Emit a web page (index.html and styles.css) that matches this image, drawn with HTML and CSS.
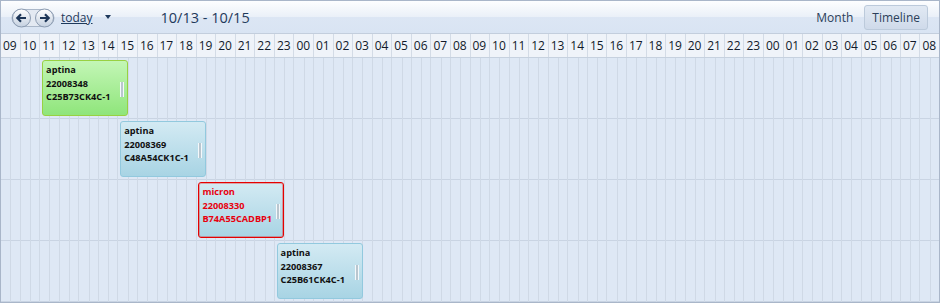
FILE: index.html
```html
<!DOCTYPE html>
<html lang="en">
<head>
    <meta charset="UTF-8">
    <title>Scheduler - Timeline</title>
    <link rel="stylesheet" href="styles.css">
</head>
<body>
    <div class="scheduler">
        <div class="toolbar">
            <div class="nav-buttons">
                <svg width="44" height="20" viewBox="0 0 44 20">
                    <defs>
                        <linearGradient id="navGrad" x1="0" y1="0" x2="0" y2="1">
                            <stop offset="0" stop-color="#ffffff"/>
                            <stop offset="1" stop-color="#c4d0e0"/>
                        </linearGradient>
                    </defs>
                    <rect x="1" y="1.5" width="42" height="17" rx="8.5" fill="#e3e9f2" stroke="#aab7c9"/>
                    <circle cx="10.5" cy="10" r="9" fill="url(#navGrad)" stroke="#8b9bb1"/>
                    <circle cx="33.5" cy="10" r="9" fill="url(#navGrad)" stroke="#8b9bb1"/>
                    <path d="M15 10H6.5M10 6.3 6.3 10 10 13.7" fill="none" stroke="#1c3557" stroke-width="2.2"/>
                    <path d="M29 10h8.5M34 6.3 37.7 10 34 13.7" fill="none" stroke="#1c3557" stroke-width="2.2"/>
                </svg>
            </div>
            <a href="#" class="today">today</a>
            <span class="caret"></span>
            <div class="range">10/13 - 10/15</div>
            <div class="views">
                <span class="view">Month</span>
                <span class="view active">Timeline</span>
            </div>
        </div>

        <div class="hours">
            <div class="hour">09</div><div class="hour">10</div><div class="hour">11</div><div class="hour">12</div>
            <div class="hour">13</div><div class="hour">14</div><div class="hour">15</div><div class="hour">16</div>
            <div class="hour">17</div><div class="hour">18</div><div class="hour">19</div><div class="hour">20</div>
            <div class="hour">21</div><div class="hour">22</div><div class="hour">23</div><div class="hour">00</div>
            <div class="hour">01</div><div class="hour">02</div><div class="hour">03</div><div class="hour">04</div>
            <div class="hour">05</div><div class="hour">06</div><div class="hour">07</div><div class="hour">08</div>
            <div class="hour">09</div><div class="hour">10</div><div class="hour">11</div><div class="hour">12</div>
            <div class="hour">13</div><div class="hour">14</div><div class="hour">15</div><div class="hour">16</div>
            <div class="hour">17</div><div class="hour">18</div><div class="hour">19</div><div class="hour">20</div>
            <div class="hour">21</div><div class="hour">22</div><div class="hour">23</div><div class="hour">00</div>
            <div class="hour">01</div><div class="hour">02</div><div class="hour">03</div><div class="hour">04</div>
            <div class="hour">05</div><div class="hour">06</div><div class="hour">07</div><div class="hour">08</div>
        </div>

        <div class="timeline">
            <!-- hour / half-hour lines -->
            <div class="slots">
                <div class="slot"></div><div class="slot"></div><div class="slot"></div><div class="slot"></div>
                <div class="slot"></div><div class="slot"></div><div class="slot"></div><div class="slot"></div>
                <div class="slot"></div><div class="slot"></div><div class="slot"></div><div class="slot"></div>
                <div class="slot"></div><div class="slot"></div><div class="slot"></div><div class="slot"></div>
                <div class="slot"></div><div class="slot"></div><div class="slot"></div><div class="slot"></div>
                <div class="slot"></div><div class="slot"></div><div class="slot"></div><div class="slot"></div>
                <div class="slot"></div><div class="slot"></div><div class="slot"></div><div class="slot"></div>
                <div class="slot"></div><div class="slot"></div><div class="slot"></div><div class="slot"></div>
                <div class="slot"></div><div class="slot"></div><div class="slot"></div><div class="slot"></div>
                <div class="slot"></div><div class="slot"></div><div class="slot"></div><div class="slot"></div>
                <div class="slot"></div><div class="slot"></div><div class="slot"></div><div class="slot"></div>
                <div class="slot"></div><div class="slot"></div><div class="slot"></div><div class="slot"></div>
            </div>
            <div class="rows">
                <div class="row"></div><div class="row"></div><div class="row"></div><div class="row"></div>
            </div>
            <!-- events, placed on half-hour columns -->
            <div class="events">
                <div class="event green" style="grid-row: 1; grid-column: 5 / span 9;">
                    <div>aptina</div><div>22008348</div><div>C25B73CK4C-1</div>
                    <span class="grip"></span>
                </div>
                <div class="event blue" style="grid-row: 2; grid-column: 13 / span 9;">
                    <div>aptina</div><div>22008369</div><div>C48A54CK1C-1</div>
                    <span class="grip"></span>
                </div>
                <div class="event blue alert" style="grid-row: 3; grid-column: 21 / span 9;">
                    <div>micron</div><div>22008330</div><div>B74A55CADBP1</div>
                    <span class="grip"></span>
                </div>
                <div class="event blue" style="grid-row: 4; grid-column: 29 / span 9;">
                    <div>aptina</div><div>22008367</div><div>C25B61CK4C-1</div>
                    <span class="grip"></span>
                </div>
            </div>
        </div>
    </div>
</body>
</html>
```

FILE: styles.css
```css
:root {
    --frame: #a9b6c9;
    --navy: #1e395b;
    --line: #cfd9e6;
    --body-bg: #dee8f5;
}

body {
    margin: 0;
    font-family: "Open Sans", "Noto Sans", sans-serif;
    background: #ffffff;
}

.scheduler {
    width: 938px;
    border: 1px solid var(--frame);
    display: flex;
    flex-direction: column;
}

/* Toolbar */
.toolbar {
    height: 32px;
    display: flex;
    align-items: center;
    padding: 0 11px 0 10px;
    background: linear-gradient(#fdfeff 0%, #eaf0f8 50%, #dce6f4 50%, #d9e4f3 100%);
    color: var(--navy);
}

.nav-buttons {
    display: flex;
    margin-top: 1px;
}

.today {
    margin-left: 6px;
    font-size: 12px;
    color: var(--navy);
    text-decoration: underline;
}

.caret {
    margin-left: 12px;
    width: 0;
    height: 0;
    border-left: 3px solid transparent;
    border-right: 3px solid transparent;
    border-top: 4px solid var(--navy);
}

.range {
    margin-left: 50px;
    font-size: 14.5px;
}

.views {
    margin-left: auto;
    display: flex;
    align-items: center;
    gap: 2px;
    font-size: 12px;
    color: #2b3f5a;
}

.view {
    padding: 3px 8px;
    border: 1px solid transparent;
    border-radius: 3px;
}

.view.active {
    padding: 3px 7px;
    border-color: #bccadb;
    background: linear-gradient(#e1e9f3, #cfdaea);
}

/* Hour header */
.hours {
    display: flex;
    border-top: 1px solid #c3cedd;
    border-bottom: 1px solid #c6d1df;
    background: #eff3f9;
}

.hour {
    flex: 1;
    height: 23px;
    line-height: 23px;
    padding-left: 2px;
    font-size: 12px;
    color: #111a2a;
    border-right: 1px solid #d3dbe6;
    box-sizing: border-box;
}

.hour:last-child {
    border-right: none;
}

/* Timeline body */
.timeline {
    display: grid;
    background: var(--body-bg);
}

.timeline > * {
    grid-area: 1 / 1;
}

.slots {
    display: flex;
}

.slot {
    flex: 1;
    border-right: 1px solid var(--line);
    position: relative;
}

.slot:last-child {
    border-right: none;
}

.slot::after {
    content: "";
    position: absolute;
    top: 0;
    bottom: 0;
    left: 50%;
    border-left: 1px solid var(--line);
}

.rows {
    display: flex;
    flex-direction: column;
}

.row {
    height: 60px;
    border-bottom: 1px solid #c9d4e3;
}

.events {
    display: grid;
    grid-template-columns: repeat(96, 1fr);
    grid-template-rows: repeat(4, 61px);
}

.event {
    position: relative;
    margin: 2px 0 3px 2px;
    padding: 2px 4px 2px 3px;
    border: 1px solid;
    border-radius: 3px;
    font-size: 9.2px;
    font-weight: bold;
    line-height: 13.5px;
    color: #101010;
    overflow: hidden;
    white-space: nowrap;
}

.event.green {
    border-color: #98d142;
    background: linear-gradient(#c3f6b6, #8fe57b);
}

.event.blue {
    border-color: #92c9de;
    background: linear-gradient(#d3eaf3, #a8d4e4);
}

.event.alert {
    border-color: #e60000;
    box-shadow: inset 0 0 0 1px rgba(230, 0, 0, 0.3);
    color: #e8000e;
}

.grip {
    position: absolute;
    right: 3px;
    top: 21px;
    width: 2px;
    height: 15px;
    border-left: 1px solid #f4f8fb;
    border-right: 1px solid #f4f8fb;
    background: #b9c6cf;
}
```
